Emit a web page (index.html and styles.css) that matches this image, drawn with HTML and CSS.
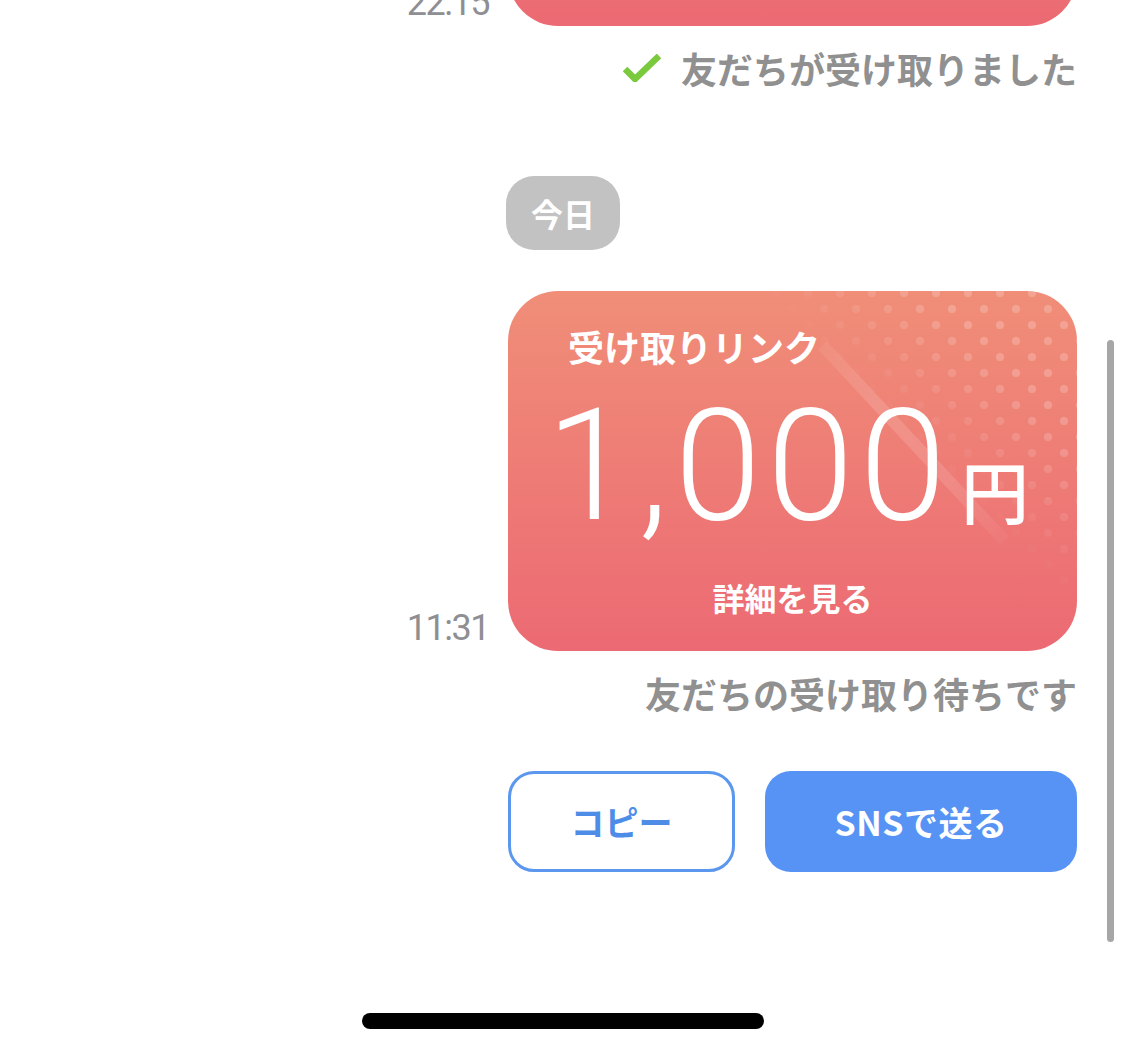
FILE: index.html
```html
<!DOCTYPE html>
<html lang="ja">
<head>
    <title>受け取りリンク</title>
    <meta charset="UTF-8">
    <meta name="viewport" content="width=device-width, initial-scale=1.0">
    <link rel="stylesheet" href="styles.css">
</head>
<body>
    <div class="screen">
        <div class="thread">
            <div class="msg msg-prev">
                <span class="time">22:15</span>
                <div class="card"></div>
            </div>

            <div class="status status-done">
                <svg class="check" width="38" height="28" viewBox="0 0 38 28">
                    <polyline points="2,15 12,25 36,2" fill="none" stroke="#7bc93c" stroke-width="6.5"/>
                </svg>
                <span>友だちが受け取りました</span>
            </div>

            <div class="day">
                <span class="day-pill">今日</span>
            </div>

            <div class="msg">
                <span class="time">11:31</span>
                <div class="card">
                    <div class="card-dots"></div>
                    <div class="card-shine"></div>
                    <div class="card-title">受け取りリンク</div>
                    <div class="card-amount">
                        <span class="amount-num">1,000</span>
                        <span class="amount-yen">円</span>
                    </div>
                    <div class="card-link">詳細を見る</div>
                </div>
            </div>

            <div class="status status-wait">友だちの受け取り待ちです</div>

            <div class="actions">
                <button class="btn btn-outline">コピー</button>
                <button class="btn btn-fill">SNSで送る</button>
            </div>
        </div>

        <div class="scrollbar"></div>
        <div class="home-bar"></div>
    </div>
</body>
</html>
```

FILE: styles.css
```css
body {
    margin: 0;
    background: #fff;
    font-family: "Noto Sans CJK JP", "Noto Sans", sans-serif;
}
.screen {
    position: relative;
    width: 1125px;
    height: 1053px;
    overflow: hidden;
    background: #fff;
}
.thread {
    display: flex;
    flex-direction: column;
    align-items: flex-end;
    padding-right: 48px;
}
.msg {
    display: flex;
    align-items: flex-end;
    gap: 19px;
}
.msg-prev {
    margin-top: -334px;
}
.time {
    font-family: Roboto, "Noto Sans", sans-serif;
    font-weight: 400;
    font-size: 36px;
    letter-spacing: -1.5px;
    line-height: 1;
    color: #8e8e93;
    margin-bottom: 5px;
}
.card {
    position: relative;
    width: 569px;
    height: 360px;
    border-radius: 50px;
    overflow: hidden;
    background: linear-gradient(180deg, #f08e78 0%, #ec6a73 100%);
    color: #fff;
    display: flex;
    flex-direction: column;
    box-sizing: border-box;
    padding: 33px 0 34px;
}
.card-dots {
    position: absolute;
    inset: 0;
    background-image:
        radial-gradient(circle, rgba(255, 255, 255, 0.2) 3.8px, transparent 4.5px),
        radial-gradient(circle, rgba(255, 255, 255, 0.2) 3.8px, transparent 4.5px);
    background-size: 32px 32px;
    background-position: -4px -14px, 12px 2px;
    -webkit-mask-image: linear-gradient(45deg, transparent 430px, #000 550px);
    mask-image: linear-gradient(45deg, transparent 430px, #000 550px);
}
.card-shine {
    position: absolute;
    left: 272px;
    top: 146px;
    width: 267px;
    height: 12px;
    transform: rotate(47deg);
    background: linear-gradient(90deg, rgba(255, 255, 255, 0.06), rgba(255, 255, 255, 0.14) 30%, rgba(255, 255, 255, 0.12) 70%, rgba(255, 255, 255, 0.03));
}
.card-title {
    position: relative;
    margin-left: 60px;
    font-size: 36px;
    font-weight: 700;
    line-height: 44px;
}
.card-amount {
    position: relative;
    display: flex;
    align-items: baseline;
    gap: 9px;
    margin-left: 38px;
    margin-top: 20px;
}
.amount-num {
    font-family: Roboto, "Noto Sans", sans-serif;
    font-weight: 300;
    font-size: 156px;
    letter-spacing: 6px;
    line-height: 1;
}
.amount-yen {
    font-size: 68px;
    font-weight: 500;
    line-height: 1;
}
.card-link {
    position: relative;
    margin-top: auto;
    text-align: center;
    font-size: 32px;
    font-weight: 700;
    line-height: 40px;
}
.status {
    font-size: 36px;
    font-weight: 700;
    line-height: 44px;
    color: #909090;
}
.status-done {
    display: flex;
    align-items: center;
    gap: 20px;
    margin-top: 20px;
}
.check {
    display: block;
}
.status-wait {
    margin-top: 20px;
}
.day {
    width: 569px;
    margin-top: 86px;
    margin-bottom: 41px;
}
.day-pill {
    display: inline-block;
    height: 74px;
    line-height: 74px;
    padding: 0 25px;
    margin-left: -2px;
    border-radius: 28px;
    background: #c2c2c2;
    color: #fff;
    font-size: 32px;
    font-weight: 700;
}
.actions {
    display: flex;
    gap: 30px;
    margin-top: 56px;
}
.btn {
    height: 101px;
    border-radius: 26px;
    font-family: "Noto Sans CJK JP", "Noto Sans", sans-serif;
    font-size: 34px;
    font-weight: 700;
    box-sizing: border-box;
    cursor: pointer;
}
.btn-outline {
    width: 227px;
    background: #fff;
    color: #4d8de8;
    border: 3px solid #5b97ee;
}
.btn-fill {
    width: 312px;
    background: #5693f5;
    color: #fff;
    border: none;
    letter-spacing: 0.5px;
}
.scrollbar {
    position: absolute;
    left: 1107px;
    top: 340px;
    width: 7px;
    height: 602px;
    border-radius: 4px;
    background: #a6a6a6;
}
.home-bar {
    position: absolute;
    left: 362px;
    top: 1013px;
    width: 402px;
    height: 16px;
    border-radius: 8px;
    background: #000;
}
```
